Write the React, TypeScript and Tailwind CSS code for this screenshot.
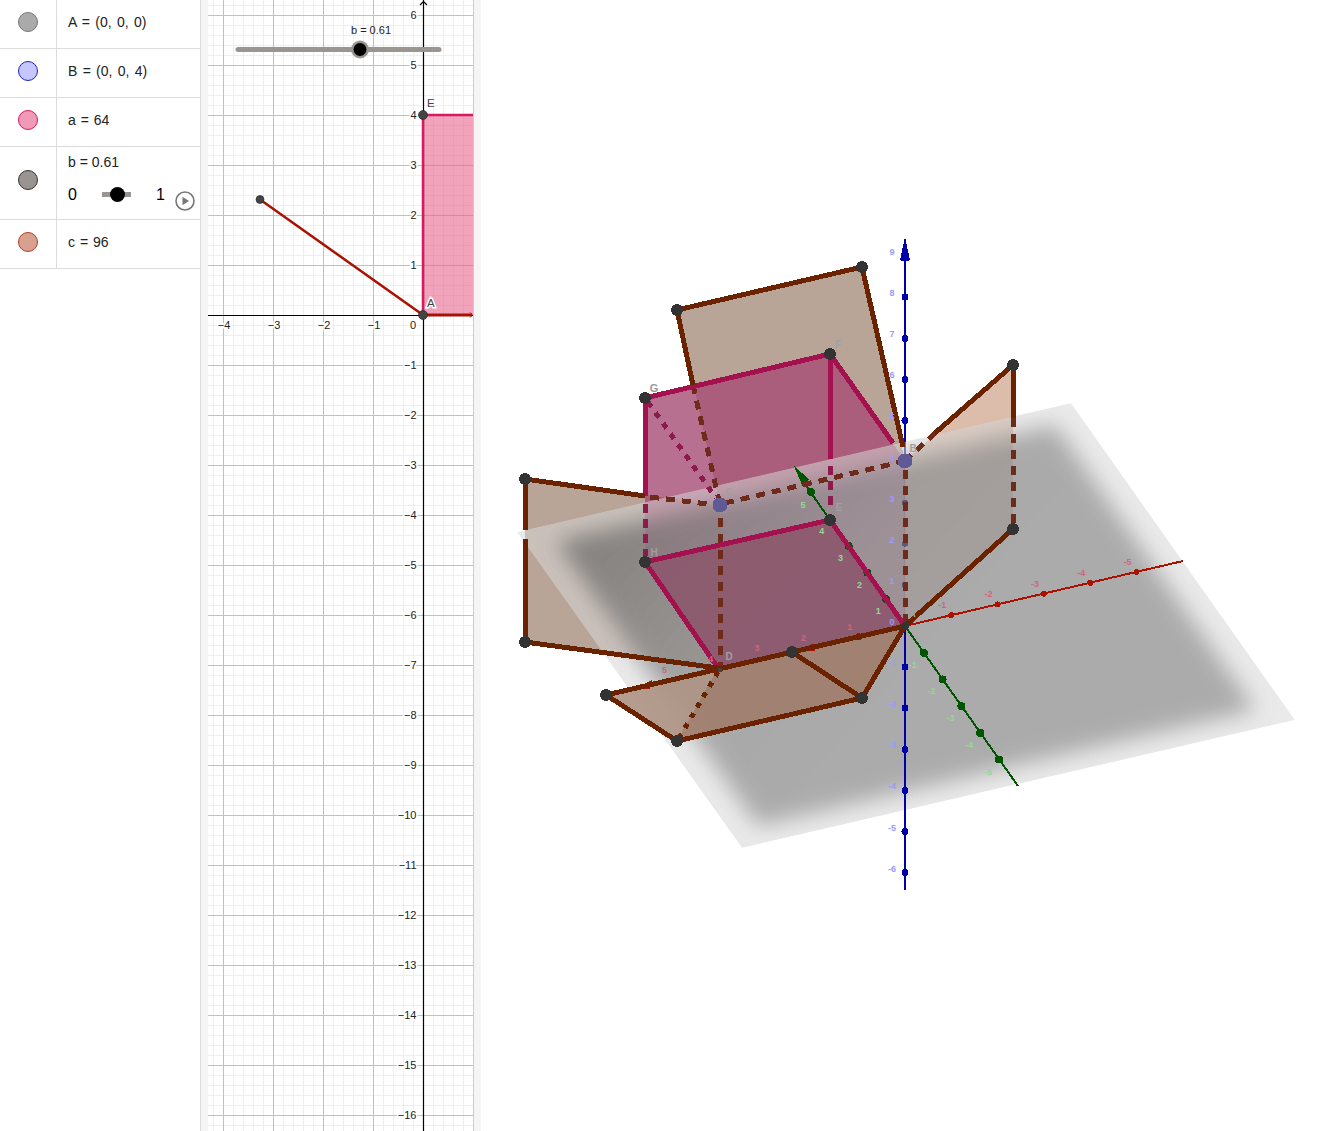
const sans = 'font-["Liberation_Sans",Arial,sans-serif]'

const Marble = ({ fill, ring }: { fill: string; ring: string }) => (
  <span className={`block w-5 h-5 rounded-full border ${fill} ${ring}`} />
)

const Row = ({ marble, children, tall }: { marble: React.ReactNode; children: React.ReactNode; tall?: boolean }) => (
  <div className={`flex border-b border-[#dcdcdc] ${tall ? 'h-[73px]' : 'h-[49px]'}`}>
    <div className={`w-[57px] shrink-0 flex items-center justify-center border-r border-[#dcdcdc] ${tall ? 'pb-[6px]' : 'pb-1'}`}>{marble}</div>
    <div className={`flex-1 flex flex-col justify-center pl-[11px] text-sm text-[#222] ${tall ? 'pb-[10px]' : 'pb-1'}`}>{children}</div>
  </div>
)

const Sidebar = () => (
  <div className={`relative w-[201px] shrink-0 border-r border-[#dcdcdc] ${sans}`}>
    <Row marble={<Marble fill="bg-[#aaaaaa]" ring="border-[#777777]" />}>
      <p className="[word-spacing:1.4px]">A = (0, 0, 0)</p>
    </Row>
    <Row marble={<Marble fill="bg-[#c6c6ff]" ring="border-[#2020c0]" />}>
      <p className="[word-spacing:1.4px]">B = (0, 0, 4)</p>
    </Row>
    <Row marble={<Marble fill="bg-[#f09ab8]" ring="border-[#d01860]" />}>
      <p className="[word-spacing:1px]">a = 64</p>
    </Row>
    <Row tall marble={<Marble fill="bg-[#999490]" ring="border-[#333333]" />}>
      <p className="text-sm leading-4">b = 0.61</p>
      <div className="flex items-center mt-[17px] h-4 text-base text-black">
        <span className="w-[34px]">0</span>
        <span className="relative w-[29px] h-[5px] bg-[#9a9590]">
          <span className="absolute left-2 -top-[5px] w-[15px] h-[15px] rounded-full bg-black" />
        </span>
        <span className="ml-[25px]">1</span>
      </div>
    </Row>
    <Row marble={<Marble fill="bg-[#d8a090]" ring="border-[#b04020]" />}>
      <p className="[word-spacing:1px]">c = 96</p>
    </Row>
    <svg className="absolute left-[175px] top-[191px]" width="20" height="20" viewBox="0 0 20 20">
      <circle cx="10" cy="10" r="9" fill="none" stroke="#777" strokeWidth="1.6" />
      <path d="M7.5 5.8 14 10l-6.5 4.2z" fill="#777" />
    </svg>
  </div>
)

const range = (a: number, b: number) => Array.from({ length: b - a + 1 }, (_, i) => a + i)

const halo = { paintOrder: 'stroke', stroke: '#fff', strokeWidth: 3 } as const

const GraphView = () => {
  const ox = 423
  const oy = 315
  return (
    <svg className="block shrink-0 w-[265px] h-[1131px]" viewBox="208 0 265 1131" fontFamily="Liberation Sans, Arial, sans-serif">
      <rect x="208" y="0" width="265" height="1131" fill="#fff" />
      {range(-22, 5).map(i => (
        <line key={i} x1={ox + i * 10 + 0.5} x2={ox + i * 10 + 0.5} y1="0" y2="1131" stroke="#eeeeee" />
      ))}
      {range(-31, 82).map(i => (
        <line key={i} y1={oy + i * 10 + 0.5} y2={oy + i * 10 + 0.5} x1="208" x2="474" stroke="#eeeeee" />
      ))}
      {[-4, -3, -2, -1].map(i => (
        <line key={i} x1={ox + i * 50 + 0.5} x2={ox + i * 50 + 0.5} y1="0" y2="1131" stroke="#c0c0c0" />
      ))}
      {range(-6, 16).map(i => (
        <line key={i} y1={oy + i * 50 + 0.5} y2={oy + i * 50 + 0.5} x1="208" x2="474" stroke="#c0c0c0" />
      ))}
      <rect x="423" y="115" width="51" height="200" fill="#e8608c" fillOpacity="0.58" />
      <line x1="423.5" x2="423.5" y1="0" y2="1131" stroke="#000" strokeWidth="1.2" />
      <line x1="208" x2="474" y1="315.5" y2="315.5" stroke="#000" strokeWidth="1.2" />
      <path d="M420 5 423.5 1.500 427 5" fill="none" stroke="#000" strokeWidth="1.2" />
      <path d="M423 315V115H474" fill="none" stroke="#d81b60" strokeWidth="2.500" />
      <line x1="423" x2="472" y1="315" y2="315" stroke="#aa1100" strokeWidth="3" />
      <path d="M470 312.500 472.500 315 470 317.500" fill="none" stroke="#aa1100" />
      <line x1="260" y1="199.500" x2="423" y2="315" stroke="#aa1100" strokeWidth="2.500" />
      <g fontSize="11" fill="#222" textAnchor="end">
        {range(-6, 16).filter(i => i !== 0).map(i => (
          <text key={i} x="416.500" y={oy + i * 50 + 4} style={halo}>{i < 0 ? -i : `\u2212${i}`}</text>
        ))}
        <text x="416" y="329" style={halo}>0</text>
      </g>
      <g fontSize="11" fill="#222" textAnchor="middle">
        {[-4, -3, -2, -1].map(i => (
          <text key={i} x={ox + i * 50 + 1} y="329" style={halo}>{`\u2212${-i}`}</text>
        ))}
      </g>
      <line x1="238" x2="439" y1="49.500" y2="49.500" stroke="#9a9590" strokeWidth="5" strokeLinecap="round" />
      <circle cx="360" cy="49.500" r="9" fill="#9a9590" />
      <circle cx="360" cy="49.500" r="6.500" fill="#000" />
      <text x="371" y="34" fontSize="11" fill="#222" textAnchor="middle">b = 0.61</text>
      {[[423, 115], [423, 315]].map(([x, y]) => (
        <circle key={y} cx={x} cy={y} r="4.500" fill="#444" stroke="#222" strokeWidth="0.6" />
      ))}
      <circle cx="260" cy="199.500" r="4" fill="#444" stroke="#222" strokeWidth="0.6" />
      <text x="427" y="107" fontSize="11.500" fill="#444">E</text>
      <text x="427" y="307" fontSize="11.500" fill="#444" style={halo}>A</text>
    </svg>
  )
}

const brown = '#6b2200'
const brownDash = '#6e2a1a'
const crimson = '#a3124e'

type Seg = [number, number, number, number]

const Lines = ({ segs, stroke, width = 5, dash }: { segs: Seg[]; stroke: string; width?: number; dash?: string }) => (
  <g stroke={stroke} strokeWidth={width} strokeDasharray={dash} fill="none">
    {segs.map(([a, b, c, d], i) => (
      <line key={i} x1={a} y1={b} x2={c} y2={d} />
    ))}
  </g>
)

const Dots = ({ pts, r, fill }: { pts: number[][]; r: number; fill: string }) => (
  <g fill={fill}>
    {pts.map(([x, y], i) => (
      <circle key={i} cx={x} cy={y} r={r} />
    ))}
  </g>
)

const Tags = ({ items, fill, size = 9 }: { items: [string, number, number][]; fill: string; size?: number }) => (
  <g fill={fill} fontSize={size} fontWeight="700" textAnchor="middle">
    {items.map(([t, x, y], i) => (
      <text key={i} x={x} y={y}>{t}</text>
    ))}
  </g>
)

const zTick = (n: number) => 626 - 41.1 * n
const xAxisPt = (n: number) => [905 - 46.3 * n, 626 + 10.8 * n]
const yAxisPt = (n: number) => [905 - 18.8 * n, 626 - 26.7 * n]
const tagOf = (n: number) => (n < 0 ? `-${-n}` : `${n}`)
const ticks = [1, 2, 3, 4, 5, -1, -2, -3, -4, -5]

const SpaceView = () => (
  <svg className="block flex-1 h-[1131px]" viewBox="481 0 850 1131" fontFamily="Liberation Sans, Arial, sans-serif">
    <defs>
      <clipPath id="plane">
        <polygon points="1071,403 1295,720 742,848 517,532" />
      </clipPath>
      <filter id="soft" x="-20%" y="-20%" width="140%" height="140%">
        <feGaussianBlur stdDeviation="11" />
      </filter>
      <linearGradient id="shade" x1="0" y1="0.4" x2="0.5" y2="0.65">
        <stop offset="0" stopColor="#5c5c5c" />
        <stop offset="0.6" stopColor="#808080" />
        <stop offset="1" stopColor="#848484" />
      </linearGradient>
    </defs>

    {/* z axis behind everything */}
    <g shapeRendering="crispEdges">
      <line x1="905" x2="905" y1="250" y2="626" stroke="#0000aa" strokeWidth="2" />
      <Dots pts={range(1, 8).map(n => [905, zTick(n)])} r={3.500} fill="#0000aa" />
      <polygon points="905,237 910,260 905,262 900,260" fill="#0000aa" />

      {/* flaps and box above the plane */}
      <polygon points="677,310 862,267 905,461 720,505" fill="#b9a598" />
      <polygon points="525,479 525,642 718,668 720,505" fill="#b9a598" />
      <polygon points="1013,365 1013,529 905,626 905,461" fill="#dcbcab" />
      <polygon points="645,398 830,354 905,461 905,626 718,668 645,562" fill="#a64c74" fillOpacity="0.8" />
    </g>

    {/* xOy plane, soft edged */}
    <g clipPath="url(#plane)">
      <polygon points="1071,403 1295,720 742,848 517,532" fill="#d8d8d8" fillOpacity="0.55" />
      <polygon points="1055,425 1256,710 758,826 556,541" fill="url(#shade)" fillOpacity="0.62" filter="url(#soft)" />
    </g>

    <g shapeRendering="crispEdges">
      {/* negative z axis comes out in front of the plane */}
      <line x1="905" x2="905" y1="626" y2="890" stroke="#0000aa" strokeWidth="2" />
      <Dots pts={range(-6, -1).map(n => [905, zTick(n)])} r={3.500} fill="#0000aa" />

      {/* floor of the box and the bottom flap sit on the plane */}
      <polygon points="645,562 830,520 905,626 718,668" fill="#8c5a6e" fillOpacity="0.95" />
      <polygon points="677,741 862,698 905,626 718,668" fill="#a07e6e" fillOpacity="0.92" />
      <polygon points="606,695 677,741 718,668" fill="#ae9486" fillOpacity="0.92" />

      <Lines stroke="#aa1100" width={2} segs={[[905, 626, 1183, 561]]} />
      <Lines stroke="#005500" width={2} segs={[[905, 626, 1018, 786], [830, 520, 800, 477]]} />
      <polygon points="794,466 809,479 803,487" fill="#005500" />
      <Dots pts={[-1, -2, -3, -4, -5].map(yAxisPt)} r={4} fill="#005500" />
      <Dots pts={[1, 2, 3].map(yAxisPt)} r={4} fill="#005500" />
      <Dots pts={[[811, 492]]} r={4} fill="#005500" />
      <Dots pts={[-1, -2, -3, -4, -5].map(xAxisPt)} r={3} fill="#aa1100" />
      <Dots pts={[1, 2].map(xAxisPt)} r={3.500} fill="#aa1100" />
      <polygon points="636,688 652,680 650,689" fill="#aa1100" />
      <Dots pts={[1, 2, 3].map(n => [905, zTick(n)])} r={3} fill="#5a5a80" />

      {/* dashed, hidden segments */}
      <Lines stroke={brownDash} dash="9 7" segs={[
        [693, 385, 720, 505],
        [650, 497, 716, 505],
        [725, 503, 905, 461],
        [905, 470, 905, 622],
        [720, 518, 720, 668],
        [1013, 418, 1013, 529],
        [935, 433, 908, 458],
      ]} />
      <Lines stroke="#8e1a4c" dash="6 7" width={5} segs={[[648, 402, 716, 498]]} />
      <Lines stroke="#8e1a4c" dash="9 6" segs={[[645, 504, 645, 556], [830, 466, 830, 510]]} />
      <Lines stroke={brown} dash="5 7" segs={[[718, 672, 679, 738]]} />

      {/* solid edges */}
      <Lines stroke={crimson} segs={[
        [645, 398, 830, 354],
        [830, 354, 893, 443],
        [645, 398, 645, 496],
        [830, 354, 830, 459],
        [645, 562, 830, 520],
        [830, 520, 905, 626],
        [645, 562, 718, 668],
      ]} />
      <Lines stroke={brown} segs={[
        [677, 310, 862, 267],
        [862, 267, 903, 447],
        [677, 310, 693, 385],
        [525, 479, 645, 496],
        [525, 479, 525, 530],
        [525, 539, 525, 642],
        [525, 642, 718, 668],
        [1013, 365, 1013, 418],
        [1013, 365, 935, 433],
        [1013, 529, 905, 626],
        [905, 626, 862, 698],
        [862, 698, 792, 652],
        [905, 626, 606, 695],
        [606, 695, 677, 741],
        [677, 741, 862, 698],
      ]} />

      <Dots r={6} fill="#333333" pts={[
        [677, 310], [862, 267], [1013, 365], [1013, 529], [525, 479], [525, 642],
        [606, 695], [677, 741], [862, 698], [792, 652], [645, 398], [830, 354],
        [830, 520], [645, 562],
      ]} />
      <Dots r={7.500} fill="#5f5a96" pts={[[905, 461], [720, 505]]} />
      <Dots r={4} fill="#333333" pts={[[905, 626]]} />
      <Dots r={2.500} fill="#444444" pts={[[720, 670]]} />
    </g>

    <Tags fill="#9a9aff" items={range(-6, 9).map(n => [tagOf(n), 892, zTick(n) - 1] as [string, number, number])} />
    <Tags fill="#cc6680" items={ticks.map(n => [tagOf(n), xAxisPt(n)[0] - 9, xAxisPt(n)[1] - 7] as [string, number, number])} />
    <Tags fill="#94d894" items={ticks.map(n => [tagOf(n), yAxisPt(n)[0] - (n < 0 ? 11 : 8), yAxisPt(n)[1] + 15] as [string, number, number])} />
    <Tags fill="#999" size={11} items={[['G', 654, 392]]} />
    <Tags fill="#a0a0a0" size={10} items={[['F', 838, 348], ['E', 839, 511], ['H', 654, 556], ['C', 729, 496], ['B', 913, 452], ['A', 912, 617], ['D', 729, 660]]} />
  </svg>
)

export default function App() {
  return (
    <div className="flex w-[1331px] h-[1131px] overflow-hidden bg-white">
      <Sidebar />
      <div className="w-[7px] shrink-0 bg-[#f5f5f5]" />
      <GraphView />
      <div className="w-[8px] shrink-0 bg-[#f5f5f5] border-l border-[#cccccc]" />
      <SpaceView />
    </div>
  )
}
